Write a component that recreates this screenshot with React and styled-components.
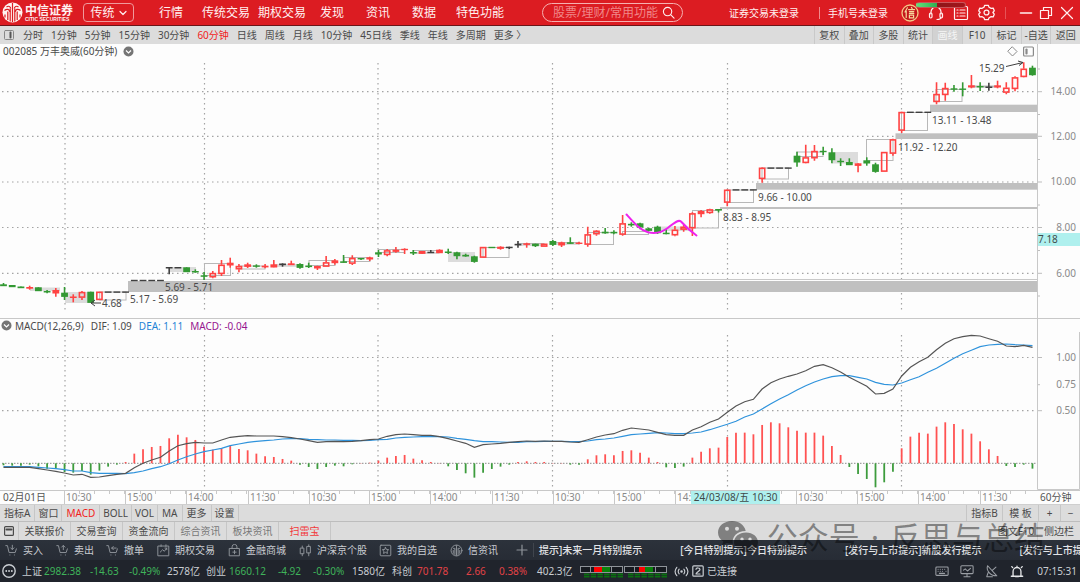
import React from "react";
import styled, { createGlobalStyle, css } from "styled-components";

const GlobalStyle = createGlobalStyle`
  * { box-sizing: border-box; }
  body {
    margin: 0;
    background: #fdfdfd;
    font-family: "Noto Sans", "Noto Sans CJK SC", sans-serif;
    font-size: 10px;
    line-height: 14px;
    color: #4a4a4a;
    overflow-x: hidden;
  }
  button, input { font: inherit; color: inherit; }
  svg { display: block; flex: none; }
`;

/* ---------- shared ---------- */

const PlainButton = styled.button`
  display: flex;
  align-items: center;
  justify-content: center;
  border: 0;
  padding: 0;
  background: none;
  white-space: nowrap;
  cursor: pointer;
`;

const Icon = ({ size = 14, box = 16, width = 1.2, children }) => (
  <svg
    width={size}
    height={size}
    viewBox={`0 0 ${box} ${box}`}
    fill="none"
    stroke="currentColor"
    strokeWidth={width}
    strokeLinecap="round"
    strokeLinejoin="round"
    aria-hidden="true"
  >
    {children}
  </svg>
);

/* ---------- title bar ---------- */

const TitleBar = styled.header`
  display: flex;
  align-items: center;
  height: 26px;
  background: #dc1c22;
  border-bottom: 1px solid #6b1518;
  color: #fff0f0;
`;

const Brand = styled.div`
  display: flex;
  align-items: center;
  gap: 2px;
  width: 83px;
  padding-left: 2px;
`;

const BrandText = styled.div`
  display: flex;
  flex-direction: column;
`;

const BrandName = styled.span`
  font: 700 12px/12px "Noto Sans CJK SC", sans-serif;
`;

const BrandLatin = styled.span`
  font: 700 5px/6px "Liberation Sans", sans-serif;
`;

const ModeButton = styled(PlainButton)`
  width: 51px;
  height: 19px;
  gap: 4px;
  border: 1px solid #f09a9c;
  border-radius: 4px;
  font-size: 12px;
`;

const Nav = styled.nav`
  display: grid;
  grid-template-columns: 43px 56px 62px 46px 46px 44px 48px;
  margin-left: 25px;
`;

const NavLink = styled.a`
  color: inherit;
  font-size: 12px;
  line-height: 18px;
  text-decoration: none;
  white-space: nowrap;
`;

const SearchBox = styled.label`
  display: flex;
  align-items: center;
  width: 141px;
  height: 19px;
  margin-left: 38px;
  padding: 0 7px 0 10px;
  border: 1px solid #f6b0b0;
  border-radius: 10px;
`;

const SearchInput = styled.input`
  flex: 1;
  min-width: 0;
  height: 17px;
  padding: 0;
  border: 0;
  outline: 0;
  background: none;
  font-size: 12px;
  &::placeholder { color: #f08789; opacity: 1; }
`;

const Account = styled.div`
  display: flex;
  align-items: center;
  margin-left: auto;
`;

const LoginButton = styled(PlainButton)`
  height: 18px;
  font-size: 10px;
`;

const BarDivider = styled.span`
  width: 1px;
  height: 12px;
  background: #f08a8c;
  opacity: ${(p) => (p.$faint ? 0.5 : 1)};
  margin: 0 ${(p) => p.$right}px 0 ${(p) => p.$left}px;
`;

const ToolIcons = styled.div`
  position: relative;
  display: flex;
  align-items: center;
  gap: 9px;
  margin-left: 13px;
`;

const Progress = styled.span`
  position: absolute;
  left: 15px;
  top: -2px;
  width: 50px;
  height: 6px;
  border-radius: 3px;
  background: linear-gradient(90deg, #5fe07a 0, #2fae50 20px, #8f1519 20px, #a5161b 100%);
  border: 1px solid #c9555a;
  border-left-color: #6fe088;
`;

const WindowButtons = styled.div`
  display: grid;
  grid-template-columns: 19px 22px 20px;
  margin-right: 3px;
`;

const seal = (
  <svg width="18" height="18" viewBox="0 0 18 18" aria-hidden="true">
    <circle cx="9" cy="9" r="8" fill="#c3151a" stroke="#f3c987" strokeWidth="1.3" />
    <g stroke="#f7d79b" strokeWidth="1.2" fill="none" strokeLinecap="round">
      <path d="M6.4 3.8 4 8M5.2 7v6.4M10.4 3.4l.8 1.4M7.6 5.6h6M8.4 7.6h4.4M8.4 9.4h4.4M8.4 11.2h4.2v2.6H8.4z" />
    </g>
  </svg>
);

const logo = (
  <svg width="21" height="21" viewBox="0 0 21 21" aria-hidden="true">
    <circle cx="10.500" cy="10.500" r="10" fill="#fff3f0" />
    <g fill="none" stroke="#dc1c22" strokeWidth="1.200">
      <path d="M10.500 1v19M8.200 6.500v13M12.800 6.500v13M5.800 9.500v8.500M15.200 9.500v8.500M3 12.500v3M18 12.500v3" />
      <path d="M2.500 8.500c2.500-2.200 5-1.200 5.500 1.500M18.500 8.500c-2.500-2.200-5-1.200-5.500 1.500M4.500 5c2-1.500 4-.5 4.200 1.500M16.500 5c-2-1.500-4-.5-4.200 1.500" />
    </g>
  </svg>
);

function Header() {
  return (
    <TitleBar>
      <Brand>
        {logo}
        <BrandText>
          <BrandName>中信证券</BrandName>
          <BrandLatin>CITIC SECURITIES</BrandLatin>
        </BrandText>
      </Brand>
      <ModeButton type="button">
        传统
        <Icon size={8} box={8}>
          <path d="M1 2.500 4 5.500 7 2.500" />
        </Icon>
      </ModeButton>
      <Nav>
        {["行情", "传统交易", "期权交易", "发现", "资讯", "数据", "特色功能"].map((t) => (
          <NavLink href="#" key={t}>{t}</NavLink>
        ))}
      </Nav>
      <SearchBox>
        <SearchInput type="text" aria-label="搜索" placeholder="股票/理财/常用功能" />
        <Icon size={13} box={14}>
          <circle cx="6" cy="6" r="4.500" />
          <path d="m9.500 9.500 3.500 3.500" />
        </Icon>
      </SearchBox>
      <Account>
        <LoginButton type="button">证券交易未登录</LoginButton>
        <BarDivider $left={20} $right={8} />
        <LoginButton type="button">手机号未登录</LoginButton>
        <ToolIcons>
          {seal}
          <PlainButton type="button" aria-label="客服">
            <Icon size={16}>
              <path d="M3 9V7a5 5 0 0 1 10 0v2M13 12c0 2-2 2.500-4 2.500" />
              <rect x="1.500" y="8" width="2.500" height="5" rx="1.200" />
              <rect x="12" y="8" width="2.500" height="5" rx="1.200" />
            </Icon>
          </PlainButton>
          <PlainButton type="button" aria-label="列表">
            <Icon size={16}>
              <rect x="1.500" y="1.500" width="13" height="13" rx="1" />
              <path d="M4 5h1M7 5h5M4 8h1M7 8h5M4 11h1M7 11h5" />
            </Icon>
          </PlainButton>
          <PlainButton type="button" aria-label="设置">
            <Icon size={17}>
              <path d="M6.300 1.200h3.400l.7 1.800 2 1.100 1.900-.3 1 2.600-1.300 1.600 1.300 1.600-1 2.600-1.900-.3-2 1.100-.7 1.800H6.300L5.600 13l-2-1.100-1.900.3-1-2.600L2 8 .7 6.400l1-2.600 1.900.3 2-1.100z" />
              <circle cx="8" cy="8" r="2.300" />
            </Icon>
          </PlainButton>
          <Progress />
        </ToolIcons>
        <BarDivider $faint $left={10} $right={10} />
        <WindowButtons>
          <PlainButton type="button" aria-label="最小化">
            <Icon size={14} box={14} width={1.6}><path d="M1.500 7h11" /></Icon>
          </PlainButton>
          <PlainButton type="button" aria-label="还原">
            <Icon size={14} box={14}>
              <path d="M4.500 4V1.500h8v8H10" />
              <rect x="1.500" y="4.500" width="8" height="8" />
            </Icon>
          </PlainButton>
          <PlainButton type="button" aria-label="关闭">
            <Icon size={14} box={14}><path d="m1.500 1.500 11 11M12.500 1.500l-11 11" /></Icon>
          </PlainButton>
        </WindowButtons>
      </Account>
    </TitleBar>
  );
}

/* ---------- period toolbar ---------- */

const PeriodBar = styled.div`
  display: flex;
  align-items: center;
  height: 18px;
  padding-left: 4px;
  background: #dcdcdc;
`;

const Periods = styled.div`
  display: flex;
  gap: 8px;
  margin-left: 9px;
`;

const Period = styled(PlainButton)`
  color: ${(p) => (p.$on ? "#f21d1d" : "#4a4a4a")};
`;

const QuickTools = styled.div`
  display: grid;
  grid-template-columns: repeat(9, 1fr);
  width: 266px;
  height: 18px;
  margin-left: auto;
`;

const QuickTool = styled(PlainButton)`
  border-left: 1px solid #c9c9c9;
  ${(p) => p.$on && css`background: #d2d2d2; color: #f6f6f6;`}
`;

const periods = ["分时", "1分钟", "5分钟", "15分钟", "30分钟", "60分钟", "日线", "周线", "月线", "10分钟", "45日线", "季线", "年线", "多周期", "更多 〉"];
const quickTools = ["复权", "叠加", "多股", "统计", "画线", "F10", "标记", "-自选", "返回"];

function Toolbar() {
  return (
    <PeriodBar>
      <PlainButton type="button" aria-label="侧栏">
        <Icon size={10} box={10} width={1}>
          <rect x=".5" y=".5" width="9" height="9" rx="1" stroke="#888" />
          <path d="M6.500 2.500v5" stroke="#555" strokeWidth="2" />
        </Icon>
      </PlainButton>
      <Periods>
        {periods.map((t) => (
          <Period type="button" key={t} $on={t === "60分钟"}>{t}</Period>
        ))}
      </Periods>
      <QuickTools>
        {quickTools.map((t) => (
          <QuickTool type="button" key={t} $on={t === "画线"}>{t}</QuickTool>
        ))}
      </QuickTools>
    </PeriodBar>
  );
}

/* ---------- chart ---------- */

const Pane = styled.section`
  border-top: ${(p) => (p.$ruled ? "1px solid #c8c8c8" : "0")};
`;

const PaneHead = styled.div`
  display: flex;
  align-items: center;
  height: ${(p) => p.$height}px;
`;

const PaneTitle = styled.h2`
  display: flex;
  flex: 1;
  align-items: center;
  gap: ${(p) => p.$gap}px;
  height: 100%;
  margin: 0;
  padding-left: ${(p) => p.$pad}px;
  font-size: 10px;
  line-height: 12px;
  font-weight: 400;
  white-space: nowrap;
`;

const Readout = styled.span`
  color: ${(p) => p.$color};
  margin-left: 4px;
`;

const PaneActions = styled.span`
  display: flex;
  gap: 5px;
  margin-left: auto;
  padding-right: 3px;
  color: #8a8a8a;
`;

const AxisHead = styled.div`
  width: 4%;
  height: 100%;
  border-left: 1px solid #c8c8c8;
`;

const Plot = styled.svg`
  width: 100%;
  height: auto;
  font-family: "Noto Sans", "Noto Sans CJK SC", sans-serif;
  font-size: 10px;
`;

const STEP = 8.72;
const cx = (i) => 3.5 + STEP * i;

/* [kind, high, low, body top, body bottom]; r hollow up, R solid up, g down, k flat */
const candles = [
  ["g", 283, 286, 284.3, 286], ["g", 285, 287, 285, 287], ["g", 286.5, 288, 286.5, 288],
  ["R", 285.7, 289.7, 287, 288.5], ["g", 287.3, 291, 287.3, 291], ["g", 290, 293.3, 291, 292.3],
  ["R", 288, 296.7, 290, 293.3], ["g", 287, 300, 292.7, 296.7], ["R", 294.3, 302.3, 296.5, 297.8],
  ["r", 291, 300, 292, 297.7], ["g", 291.7, 302.7, 291.7, 302.7], ["r", 291.7, 300, 291.7, 300],
  ["k", 292, 292, 291.4, 292.6], ["k", 292, 292, 291.4, 292.6], ["k", 292, 292, 291.4, 292.6],
  ["k", 280, 280, 279.8, 281], ["k", 280, 280, 279.8, 281], ["k", 280, 280, 279.8, 281], ["k", 280, 280, 279.8, 281],
  ["k", 267, 274.3, 267, 268.3], ["k", 267, 268, 267, 268.3], ["g", 267.3, 272, 267.3, 272],
  ["g", 269.3, 272.7, 271, 272.3], ["g", 272, 280, 275.3, 276.6], ["r", 271, 278.3, 273, 277.3],
  ["r", 260, 276, 264.7, 274], ["R", 257.7, 267.7, 262.7, 265.3], ["r", 264, 272.3, 266, 269.3],
  ["R", 262.7, 268, 264.3, 266.7], ["g", 264.3, 267.7, 265.4, 266.6], ["R", 264, 268.3, 265.7, 267.2],
  ["R", 260, 267.3, 264.3, 267.3], ["k", 263.3, 266.7, 263.5, 265], ["R", 260.7, 265, 263.3, 265],
  ["g", 263.3, 268.7, 264, 267.7], ["g", 262.7, 268, 265.5, 266.9], ["R", 265.7, 270, 266, 268.3],
  ["r", 256, 266.7, 262.3, 266.7], ["R", 259, 264.7, 260.3, 263], ["g", 255, 262.7, 261.3, 262.7],
  ["r", 255.3, 265, 258, 263.7], ["g", 258, 260, 258, 259.2], ["R", 256.7, 261, 257.3, 259.3],
  ["g", 250, 257, 252.3, 254.3], ["r", 249, 256.3, 250.3, 255], ["R", 247, 252.7, 249.7, 251.7],
  ["R", 248.3, 254, 248.8, 250], ["g", 250, 255, 252, 253.3], ["R", 251, 253.7, 251, 253.7],
  ["k", 250, 253, 251.7, 253], ["R", 249.3, 253, 249.7, 253], ["g", 248.7, 254, 251.5, 252.8],
  ["g", 251.7, 259.3, 252.3, 256], ["g", 253.7, 256.7, 254.8, 256.3], ["g", 255.7, 262.7, 256.3, 261.7],
  ["r", 247, 257.7, 247, 257.7], ["g", 247, 248, 246.8, 248], ["R", 246.3, 249.7, 246.7, 248.7],
  ["k", 246.7, 249, 246.7, 248], ["k", 241, 247.7, 243.8, 245.2], ["R", 242.7, 247.7, 243.3, 244.7],
  ["g", 243.7, 247, 243.7, 246], ["r", 243.7, 246.7, 243.7, 246.7], ["g", 240, 246, 241, 244.7],
  ["R", 241.7, 247, 242.3, 245.3], ["g", 237.3, 244, 242.3, 243.7], ["R", 241.7, 244.3, 242.6, 243.8],
  ["r", 226.7, 246.7, 234.3, 244.7], ["r", 230, 235.7, 230.7, 234.3], ["g", 228, 233.7, 231.7, 233.2],
  ["g", 230.3, 234.3, 231.8, 233.2], ["r", 215, 235.7, 223.3, 234.7], ["g", 222.3, 226.7, 223.8, 225.2],
  ["g", 222.7, 229.3, 223.3, 227.3], ["g", 227.7, 231.3, 228.3, 230.7], ["g", 225.7, 234, 226.7, 233],
  ["g", 229, 234.3, 232.7, 234], ["r", 226, 236.3, 229.7, 235.3], ["r", 225, 231.7, 226.7, 229.7],
  ["r", 212.3, 236, 213.3, 228.3], ["R", 210, 217.3, 211, 214], ["r", 208.7, 213.7, 209.3, 213],
  ["g", 209, 212.5, 209, 210.4], ["r", 189.3, 206.3, 189.7, 202.7],
  ["k", 190, 190, 189.2, 190.4], ["k", 190, 190, 189.2, 190.4], ["k", 190, 190, 189.2, 190.4],
  ["r", 167.3, 182.7, 167.7, 179],
  ["k", 168, 168, 167.4, 168.6], ["k", 168, 168, 167.4, 168.6], ["k", 168, 168, 167.4, 168.6],
  ["g", 151.7, 166.7, 155.7, 162.3], ["r", 144.7, 163.3, 157.3, 163], ["r", 145, 160.7, 151, 158.3],
  ["g", 146.7, 155, 150.8, 152], ["g", 148.3, 163.3, 152.3, 160], ["g", 158.3, 166, 160.8, 162],
  ["g", 158.3, 165, 162, 165], ["R", 163.3, 172.3, 163.3, 165.7], ["g", 157.3, 165.7, 160.3, 163.3],
  ["g", 162.7, 172.7, 164.3, 171.7], ["r", 152, 171.7, 152, 171.7], ["r", 138.7, 155.7, 139.3, 153.7],
  ["r", 111.7, 133, 112, 130.7],
  ["k", 112, 112, 111.6, 112.8], ["k", 112, 112, 111.6, 112.8], ["k", 112, 112, 111.6, 112.8],
  ["r", 82.3, 104.3, 94, 102], ["r", 82.7, 100.7, 88, 95], ["g", 85, 91.7, 88.3, 89.5],
  ["g", 82.3, 96.3, 88.5, 89.7], ["R", 75, 88.3, 85.3, 87.3], ["g", 82.3, 91, 86, 87.2],
  ["k", 82.7, 90.7, 86.5, 87.8], ["R", 80.7, 88.3, 85.3, 87.3], ["r", 82.3, 94.3, 87.7, 92.7],
  ["r", 76.3, 91.3, 77.3, 89], ["r", 62.3, 77.3, 68.7, 77], ["g", 65.7, 75.7, 67.7, 75],
];

const inks = { r: "#ff4343", R: "#ff4343", g: "#339933", k: "#3f3f3f" };

/* [left, top, right, bottom] of each session frame */
const frames = [
  [99.7, 292, 126, 300], [204.5, 263.5, 230.5, 275.5], [239, 266, 265, 269], [309, 260.5, 335, 265.5],
  [344, 257.5, 370, 261.5], [378.5, 249.5, 404.5, 252.5], [413, 250.5, 439, 253],
  [483, 247.5, 509, 257.5], [518, 243.5, 544, 245], [552.5, 242.5, 579, 244],
  [587.5, 232.5, 613.5, 244.5], [622.5, 231.5, 648.5, 234.5], [692.5, 210.5, 718.5, 228],
  [727.5, 190, 753.5, 202.5], [762, 168, 788.5, 179], [797, 152, 823, 156.5],
  [866.5, 139.5, 893, 160.5], [901.5, 112.5, 927.5, 130.5], [936, 89.5, 962, 101.5],
  [971, 86, 997, 87],
];
const shades = [
  [30, 287.5, 60, 291], [65, 292, 91, 303], [169, 267, 196, 272], [274, 264, 300, 267],
  [448, 252, 475, 262], [657, 226.5, 692, 231], [832, 152, 858, 163.5],
];
const bands = [
  [930, 104.7, 112], [895.5, 133.3, 139], [756, 183, 189.7], [720, 207, 209], [128, 281, 292],
];
const notes = [
  [979, 71.5, "15.29"], [932, 123.5, "13.11 - 13.48"], [898, 150.5, "11.92 - 12.20"],
  [758, 201, "9.66 - 10.00"], [723, 220.5, "8.83 - 8.95"], [165, 291, "5.69 - 5.71"],
  [130, 303, "5.17 - 5.69"], [102, 307, "4.68"],
];
const days = [65, 204.5, 378, 552.5, 727.5, 901.5];

function Grid({ rows, top, bottom }) {
  return (
    <g stroke="#a4a4a4" strokeWidth="1.200" strokeDasharray="1.500 3.500">
      {rows.map((y) => <path key={y} d={`M2 ${y}H1037`} />)}
      {days.map((x) => <path key={x} d={`M${x} ${top}V${bottom}`} />)}
    </g>
  );
}

function PricePlot() {
  const levels = [[91.7, "14.00"], [136.3, "12.00"], [182, "10.00"], [227.5, "8.00"], [273.3, "6.00"]];
  return (
    <Plot viewBox="0 58 1080 260" role="img" aria-label="60分钟K线">
      <Grid rows={levels.map((l) => l[0])} top={63} bottom={311} />
      {bands.map(([x, a, b]) => <rect key={x} x={x} y={a} width={1037 - x} height={b - a} fill="#c0c0c0" />)}
      <path d="M190 279.500H1037" stroke="#c8c8c8" />
      {shades.map(([l, t, r, b]) => <rect key={l} x={l} y={t} width={r - l} height={b - t} fill="#dcdcdc" />)}
      {frames.map(([l, t, r, b]) => (
        <rect key={l} x={l} y={t} width={r - l} height={b - t} fill="#fdfdfd" fillOpacity=".5" stroke="#b8b8b8" />
      ))}
      {candles.map(([kind, high, low, top, bottom], i) => {
        const x = cx(i);
        const ink = inks[kind];
        if (kind === "r") {
          return (
            <g key={i} stroke={ink} fill="none" strokeWidth="1.600">
              <path d={`M${x} ${high}V${top}M${x} ${bottom}V${low}`} />
              <rect x={x - 2.6} y={top + 0.6} width="5.200" height={Math.max(1.5, bottom - top - 1.2)} />
            </g>
          );
        }
        return (
          <g key={i}>
            <path d={`M${x} ${high}V${low}`} stroke={ink} strokeWidth="1.600" />
            <rect x={x - 3.4} y={top} width="6.800" height={bottom - top + 0.2} fill={ink} />
          </g>
        );
      })}
      <path
        d="M626.500 214.500C634 223 640 230 648 232.300C656 234 661 233 667 228.500C673 224 678 219 681 221.500C685 226 690 231 696.500 235.500"
        fill="none" stroke="#ee22ee" strokeWidth="2" strokeLinecap="round"
      />
      <g fill="none" stroke="#3f3f3f">
        <path d="M1006 66.500 1023 62.500M1018 61l5 1.500-4 3" />
        <path d="M101 303H91M95 300l-4 3 4 3" />
      </g>
      <g fill="#4a4a4a">
        {notes.map(([x, y, t]) => <text key={t} x={x} y={y}>{t}</text>)}
      </g>
      <path d="M1037.500 58V318" stroke="#c8c8c8" />
      <g stroke="#bdbdbd">
        {levels.map(([y]) => <path key={y} d={`M1038 ${y}h4`} />)}
        {[69, 114.5, 159.5, 205, 250.5, 296].map((y) => <path key={y} d={`M1038 ${y}h2`} />)}
      </g>
      <g fill="#8a8a8a" textAnchor="end">
        {levels.map(([y, t]) => <text key={t} x="1076" y={y + 3.3}>{t}</text>)}
      </g>
      <rect x="1038" y="233" width="42" height="13" fill="#aff0ee" />
      <text x="1038" y="243" fill="#3f4a4a">7.18</text>
    </Plot>
  );
}

/* histogram, fast line and slow line, one entry per candle */
const bars = [
  -6, -7, -7, -4, -9, -16, -15, -26, -28, -23, -34, -22, -10, -4, 4, 29, 42, 49, 52, 75, 86, 78, 70, 50, 41, 45, 53, 43, 39, 29,
  21, 19, 13, 8, -4, -11, -17, -11, -7, -9, -3, 1, 2, 8, 17, 22, 25, 14, 9, 4, 1, -9, -20, -30, -43, -28, -17, -10, -4, 4,
  6, 4, 4, 1, 1, -4, -4, 12, 24, 27, 24, 37, 39, 32, 17, 4, -12, -14, -10, 17, 35, 45, 47,
  79, 92, 92, 87, 115, 123, 120, 108, 98, 92, 92, 83, 52, 25, -11, -32, -47, -72, -57, -25, 45, 80, 92, 89, 110, 123, 118, 102, 89, 66, 42, 22, -8, -11, -4, -16,
];
const fast = [
  142, 142, 142, 142, 146, 150, 154, 159, 165, 163, 172, 171, 167, 163, 160, 143, 130, 120, 112, 93, 77, 71, 67, 69, 69, 60, 52, 49, 47, 48,
  48, 48, 50, 53, 57, 62, 67, 65, 64, 65, 64, 62, 59, 57, 49, 44, 42, 44, 46, 46, 50, 56, 63, 70, 82, 74, 72, 70, 67, 65,
  63, 64, 63, 64, 64, 66, 67, 59, 51, 45, 41, 31, 24, 27, 30, 37, 44, 46, 46, 30, 20, 7, -3,
  -23, -42, -55, -62, -93, -112, -123, -131, -138, -148, -161, -166, -157, -144, -128, -115, -101, -78, -80, -93, -132, -158, -175, -188,
  -211, -230, -244, -250, -254, -252, -244, -236, -222, -220, -224, -218,
];
const slow = [
  140, 140, 140, 140, 142, 144, 146, 149, 153, 153, 158, 160, 160, 160, 161, 158, 153, 146, 140, 131, 120, 110, 102, 95, 90, 85, 77, 72, 67, 64,
  62, 60, 57, 56, 56, 58, 59, 60, 60, 61, 61, 62, 61, 59, 58, 54, 52, 51, 50, 49, 50, 51, 55, 58, 62, 65, 65, 66, 67, 67,
  65, 65, 64, 64, 64, 65, 65, 63, 59, 57, 54, 49, 44, 42, 40, 38, 39, 41, 41, 39, 36, 29, 21,
  13, 4, -9, -18, -33, -49, -63, -76, -90, -103, -114, -123, -130, -133, -133, -128, -123, -113, -107, -105, -111, -121, -130, -143,
  -155, -170, -185, -199, -209, -220, -225, -227, -228, -226, -225, -223,
];
const linePoints = (series) => series.map((v, i) => `${cx(i).toFixed(1)},${(420 + v / 3).toFixed(1)}`).join(" ");

function MacdPlot() {
  const levels = [[357.5, "1.00"], [384.7, "0.75"], [410.7, "0.50"]];
  return (
    <Plot viewBox="0 332 1080 158" role="img" aria-label="MACD">
      <Grid rows={[357.5, 410.7]} top={335} bottom={488} />
      <path d="M2 463.300H1037" stroke="#8a8a8a" strokeDasharray="1.500 1.500" />
      {bars.map((v, i) => (
        <path key={i} d={`M${cx(i)} 463.300v${-v / 3}`} stroke={v > 0 ? "#ff5252" : "#3d9c3d"} strokeWidth="1.800" />
      ))}
      <polyline points={linePoints(slow)} fill="none" stroke="#2f93dc" strokeWidth="1.200" />
      <polyline points={linePoints(fast)} fill="none" stroke="#555" strokeWidth="1.200" />
      <path d="M1037.500 332V489.500H1079.500V332" fill="none" stroke="#c8c8c8" />
      <g stroke="#bdbdbd">
        <path d="M1038 357.500h4M1038 384.700h2M1038 410.700h4" />
      </g>
      <g fill="#8a8a8a" textAnchor="end">
        {levels.map(([y, t]) => <text key={t} x="1076" y={y + 3.3}>{t}</text>)}
      </g>
    </Plot>
  );
}

const MenuDot = () => (
  <svg width="11" height="11" viewBox="0 0 11 11" aria-hidden="true">
    <circle cx="5.500" cy="5.500" r="5" fill="#757575" />
    <path d="M3 4.500 5.500 7 8 4.500" fill="none" stroke="#fff" strokeWidth="1.200" />
  </svg>
);

/* ---------- time axis ---------- */

const TimeAxis = styled.div`
  position: relative;
  display: grid;
  grid-template-columns: 64fr 61fr 61fr 62fr 61fr 60fr 61fr 62fr 61fr 61fr 61fr 61fr 60fr 61fr 61fr 62fr 57fr 43fr;
  height: 14px;
  border-top: 1px solid #c8c8c8;
  color: #8a8a8a;
`;

const TimeCell = styled.span`
  min-width: 0;
  padding-left: ${(p) => (p.$edge ? 3 : 1)}px;
  line-height: 13px;
  white-space: nowrap;
  border-left: ${(p) => (p.$edge ? "0" : "1px solid #c8c8c8")};
  color: ${(p) => (p.$edge ? "#555" : "inherit")};
  background: ${(p) => (p.$edge ? "none" : "linear-gradient(90deg, transparent 14px, #c8c8c8 14px) 0 0 / 15px 3px repeat-x")};
`;

const TimeCursor = styled.span`
  position: absolute;
  left: 64%;
  top: 0;
  width: 89px;
  height: 13px;
  line-height: 13px;
  text-align: center;
  white-space: nowrap;
  background: #aff0ee;
  color: #3f4a4a;
`;

const times = ["10:30", "15:00", "14:00", "11:30", "10:30", "15:00", "14:00", "11:30", "10:30", "15:00", "14:00", "", "10:30", "15:00", "14:00", "11:30"];

/* ---------- lower panels ---------- */

const Lower = styled.div`
  position: relative;
  overflow: hidden;
`;

const TabRow = styled.div`
  display: flex;
  height: ${(p) => p.$height}px;
  background: #dcdcdc;
  border-top: 1px solid ${(p) => (p.$strong ? "#bdbdbd" : "#cfcfcf")};
`;

const Tab = styled(PlainButton)`
  padding: 0 ${(p) => p.$pad ?? 4}px;
  border-right: 1px solid #c6c6c6;
  color: ${(p) => p.$color ?? "#4a4a4a"};
`;

const InfoTab = styled(Tab)`
  width: 52px;
  padding: 0;
`;

const RightGroup = styled.div`
  display: grid;
  grid-template-columns: ${(p) => p.$columns};
  margin-left: auto;
`;

const EndTab = styled(PlainButton)`
  border-left: 1px solid #c6c6c6;
`;

const TradeBar = styled.div`
  display: flex;
  align-items: center;
  height: 20px;
  overflow: hidden;
  background: linear-gradient(#2c323b, #272c35);
  color: #c9cdd2;
`;

const Actions = styled.div`
  display: grid;
  grid-template-columns: 51px 50px 51px 71px 71px 80px 71px 66px 17px;
  flex: none;
  padding-left: 5px;
`;

const Action = styled(PlainButton)`
  justify-content: flex-start;
  gap: 5px;
  svg { color: #8e9399; }
`;

const Ticker = styled.div`
  display: flex;
  flex: 1;
  gap: 38px;
  min-width: 0;
  height: 14px;
  padding-left: 5px;
  overflow: hidden;
  border-left: 1px solid #40454d;
`;

const TickerLink = styled.a`
  flex: none;
  color: #e2e4e7;
  font-weight: 500;
  text-decoration: none;
`;

const StatusBar = styled.footer`
  display: flex;
  align-items: center;
  height: 22px;
  background: #20242c;
  color: #c9cdd2;
`;

const Quote = styled.div`
  display: grid;
  grid-template-columns: ${(p) => p.$columns};
  align-items: center;
  white-space: nowrap;
`;

const Figure = styled.span`
  color: ${(p) => p.$color};
`;

const StatusIcons = styled.div`
  display: flex;
  align-items: center;
  gap: 11px;
  margin-left: auto;
  color: #9a9ea4;
`;

const Clock = styled.time`
  margin: 0 3px 0 13px;
`;

const Connection = styled.span`
  display: flex;
  align-items: center;
  gap: 3px;
  margin-left: 7px;
`;

const Watermark = styled.div`
  position: absolute;
  right: 35px;
  top: 15px;
  display: flex;
  align-items: center;
  gap: 8px;
  color: rgba(0, 0, 0, 0.42);
  font-size: 31px;
  line-height: 36px;
  white-space: nowrap;
  pointer-events: none;
`;

const WatermarkName = styled.div`
  display: flex;
  gap: 11px;
`;

const cart = <path d="M1 2h2l2 8.500h7.500L14 6M6 13.500h.1M11.500 13.500h.1" />;
const actions = [
  ["买入", <>{cart}<path d="M9 1.500v5M7 4.800l2 2 2-2" /></>],
  ["卖出", <>{cart}<path d="M9 7V2M7 3.800l2-2 2 2" /></>],
  ["撤单", <>{cart}<path d="M7 5h5.500M9 3 7 5l2 2" /></>],
  ["期权交易", <><rect x="1.500" y="2.500" width="13" height="12" /><path d="m4 10 3-3 2 2 3-4M9.800 5H12v2M5 1v2M11 1v2" /></>],
  ["金融商城", <><rect x="2" y="5.500" width="12" height="9" /><path d="M5 5.500V3.500a3 3 0 0 1 6 0v2M8 8v4M6 10h4" /></>],
  ["沪深京个股", <><rect x="2" y="5" width="4" height="7" /><rect x="10" y="3" width="4" height="8" /><path d="M4 2.500V5M4 12v2.500M12 1v2M12 11v3.500" /></>],
  ["我的自选", <><rect x="1.500" y="1.500" width="13" height="13" rx="1" /><path d="m8 4.200 1.200 2.500 2.700.3-2 1.900.5 2.700L8 10.300l-2.400 1.300.5-2.700-2-1.900 2.700-.3z" /></>],
  ["信资讯", <><circle cx="8" cy="8" r="6.700" /><path d="M8 2v12M6 6v7M10 6v7M4 8v3.500M12 8v3.500M4 5.500c1.500-1 2 0 2 .5M12 5.500c-1.500-1-2 0-2 .5" /></>],
];

const UP = "#e04246";
const DOWN = "#3fb35a";

const Meter = () => (
  <svg width="87" height="13" viewBox="0 0 87 13" aria-hidden="true">
    {[0, 44].map((x, n) => (
      <g key={x}>
        <rect x={x + 0.5} y="1.500" width="42" height="6" fill="#16191f" stroke="#8e9399" />
        <path d={`M${x + 10.5} 1.500v6M${x + 31.5} 1.500v6`} stroke="#8e9399" />
        <rect x={x + (n ? 15 : 14)} y="2" width={n ? 6 : 8} height="5" fill="#f00" />
        <rect x={x + (n ? 21 : 22)} y="2" width="8" height="5" fill="#0a820a" />
        <path d={`M${x + 4} 10.500H${x + 43}`} stroke="#0a7010" strokeWidth="4" strokeDasharray="5.500 1.200" />
        <path d={`M${x + 4} 10.500H${x + 43}`} stroke="#20242c" strokeWidth=".6" />
      </g>
    ))}
  </svg>
);

function LowerPanels() {
  return (
    <Lower>
      <TabRow $height={17}>
        <Tab type="button">指标A</Tab>
        <Tab type="button" $pad={3}>窗口</Tab>
        <Tab type="button" $color="#f21d1d">MACD</Tab>
        <Tab type="button" $pad={3}>BOLL</Tab>
        <Tab type="button" $pad={3}>VOL</Tab>
        <Tab type="button">MA</Tab>
        <Tab type="button">更多</Tab>
        <Tab type="button" $pad={3}>设置</Tab>
        <RightGroup $columns="36px 36px 22px 20px">
          <EndTab type="button">指标B</EndTab>
          <EndTab type="button">模 板</EndTab>
          <EndTab type="button" aria-label="放大">+</EndTab>
          <EndTab type="button" aria-label="缩小">−</EndTab>
        </RightGroup>
      </TabRow>
      <TabRow $height={19} $strong>
        <Tab type="button" aria-label="面板" $pad={4}>
          <Icon size={10} box={10}>
            <rect x=".6" y=".6" width="8.800" height="8.800" rx="1" />
            <path d="M2.500 3.500h5" strokeWidth="2" />
          </Icon>
        </Tab>
        {["关联报价", "交易查询", "资金流向"].map((t) => <InfoTab type="button" key={t}>{t}</InfoTab>)}
        {["综合资讯", "板块资讯"].map((t) => <InfoTab type="button" key={t} $color="#777">{t}</InfoTab>)}
        <InfoTab type="button" $color="#f2383a">扫雷宝</InfoTab>
        <RightGroup $columns="42px 43px">
          <PlainButton type="button">图文F10</PlainButton>
          <EndTab type="button">侧边栏</EndTab>
        </RightGroup>
      </TabRow>
      <TradeBar>
        <Actions>
          {actions.map(([t, art]) => (
            <Action type="button" key={t}>
              <Icon size={13}>{art}</Icon>
              {t}
            </Action>
          ))}
          <Action type="button" aria-label="添加">
            <Icon size={12} box={12}><path d="M6 1v10M1 6h10" /></Icon>
          </Action>
        </Actions>
        <Ticker>
          <TickerLink href="#">提示]未来一月特别提示</TickerLink>
          <TickerLink href="#">[今日特别提示]今日特别提示</TickerLink>
          <TickerLink href="#">[发行与上市提示]新股发行提示</TickerLink>
          <TickerLink href="#">[发行与上市提示]</TickerLink>
        </Ticker>
      </TradeBar>
      <StatusBar>
        <Quote $columns="22px 22px 46px 39px 38px 39px">
          <Icon size={16} width={1.4}>
            <circle cx="9" cy="8" r="6.200" />
            <path d="M6.200 8h.1M9 8h.1M11.800 8h.1" strokeWidth="1.800" />
          </Icon>
          <span>上证</span>
          <Figure $color={DOWN}>2982.38</Figure>
          <Figure $color={DOWN}>-14.63</Figure>
          <Figure $color={DOWN}>-0.49%</Figure>
          <span>2578亿</span>
        </Quote>
        <Quote $columns="23px 49px 35px 39px 40px">
          <span>创业</span>
          <Figure $color={DOWN}>1660.12</Figure>
          <Figure $color={DOWN}>-4.92</Figure>
          <Figure $color={DOWN}>-0.30%</Figure>
          <span>1580亿</span>
        </Quote>
        <Quote $columns="25px 49px 33px 38px 43px">
          <span>科创</span>
          <Figure $color={UP}>701.78</Figure>
          <Figure $color={UP}>2.66</Figure>
          <Figure $color={UP}>0.38%</Figure>
          <span>402.3亿</span>
        </Quote>
        <Meter />
        <Connection>
          <Icon size={15}>
            <path d="M8 8h.1" strokeWidth="2.500" />
            <path d="M5.500 5.500c-1.200 1.500-1.200 3.500 0 5M10.500 5.500c1.200 1.500 1.200 3.500 0 5M3 3.500c-2.200 2.700-2.200 6.300 0 9M13 3.500c2.200 2.700 2.200 6.300 0 9" />
          </Icon>
          <Icon size={12} box={12}>
            <rect x=".8" y=".8" width="10.400" height="10.400" rx="1" />
            <path d="M4 4.300C4 2.500 8 2.500 8 4.500 8 6 4.500 7 4 9h4" />
          </Icon>
          已连接
        </Connection>
        <StatusIcons>
          <Icon size={14}>
            <rect x="1" y="3.500" width="14" height="9.500" rx="1" />
            <path d="M3.500 6h.1M6 6h.1M8.500 6h.1M11 6h.1M3.500 8.300h.1M6 8.300h.1M8.500 8.300h.1M12.500 8.300h.1M5 10.700h6" />
          </Icon>
          <Icon size={14}>
            <rect x="1" y="2" width="14" height="9" rx="1" />
            <path d="m4 7 2-1.500L8.500 8 12 5M8 11v3M4.500 14.500h7" />
          </Icon>
          <Icon size={14}>
            <path d="M3 2c-2 5 3 12 10.500 11.500zM8 7.500 12.500 3.500M3.500 10 2 14.500h6.500" />
          </Icon>
          <Icon size={14} width={1.5}>
            <path d="M3.500 13V8.500a4.500 4.500 0 0 1 9 0V13M1.500 14h13M6.500 14.500h3M8 4V2.500M3 4 2 3M13 4l1-1" stroke="#e6e8ea" />
          </Icon>
        </StatusIcons>
        <Clock>07:15:31</Clock>
      </StatusBar>
      <Watermark aria-hidden="true">
        <svg width="42" height="34" viewBox="0 0 42 34" fill="currentColor">
          <path fillRule="evenodd" d="M15 1C7 1 1 6 1 12.500c0 3.800 2 7 5.300 9L5 25.500l4.800-2.400c1.600.5 3.300.7 5.200.7h.8C14.600 17 20 11 28.700 11 27.500 5 22 1 15 1zM10 6.700a2 2 0 1 1 0 4 2 2 0 0 1 0-4zm10 0a2 2 0 1 1 0 4 2 2 0 0 1 0-4z" />
          <path fillRule="evenodd" d="M29 12.500c-6.800 0-12 4.300-12 9.800s5.200 9.800 12 9.800c1.500 0 3-.2 4.300-.6l3.900 2-1.100-3.300c3-1.800 4.900-4.600 4.900-7.900 0-5.500-5.200-9.800-12-9.800zm-4 5a1.700 1.700 0 1 1 0 3.400 1.700 1.700 0 0 1 0-3.400zm8 0a1.700 1.700 0 1 1 0 3.400 1.700 1.700 0 0 1 0-3.400z" />
        </svg>
        <WatermarkName>
          <span>公众号</span>
          <span>·</span>
          <span>反思与总结</span>
        </WatermarkName>
      </Watermark>
    </Lower>
  );
}

export default function App() {
  return (
    <>
      <GlobalStyle />
      <Header />
      <Toolbar />
      <main>
        <Pane>
          <PaneHead $height={14}>
            <PaneTitle $gap={6} $pad={3}>
              002085 万丰奥威(60分钟)
              <MenuDot />
              <PaneActions>
                <Icon size={11} box={11} width={1}><path d="m5.500 1 4.500 4.500L5.500 10 1 5.500z" /></Icon>
                <Icon size={11} box={11}>
                  <rect x=".6" y="1" width="9.800" height="9" rx="1" />
                  <path d="M3.500 3.500v4" strokeWidth="2.200" />
                </Icon>
              </PaneActions>
            </PaneTitle>
            <AxisHead />
          </PaneHead>
          <PricePlot />
        </Pane>
        <Pane $ruled>
          <PaneHead $height={13}>
            <PaneTitle $gap={3} $pad={1}>
              <MenuDot />
              MACD(12,26,9)
              <Readout>DIF: 1.09</Readout>
              <Readout $color="#1f83d6">DEA: 1.11</Readout>
              <Readout $color="#96168f">MACD: -0.04</Readout>
            </PaneTitle>
            <AxisHead />
          </PaneHead>
          <MacdPlot />
        </Pane>
        <TimeAxis>
          <TimeCell $edge>02月01日</TimeCell>
          {times.map((t, i) => <TimeCell key={i}>{t}</TimeCell>)}
          <TimeCell $edge>60分钟</TimeCell>
          <TimeCursor>24/03/08/五 10:30</TimeCursor>
        </TimeAxis>
      </main>
      <LowerPanels />
    </>
  );
}
